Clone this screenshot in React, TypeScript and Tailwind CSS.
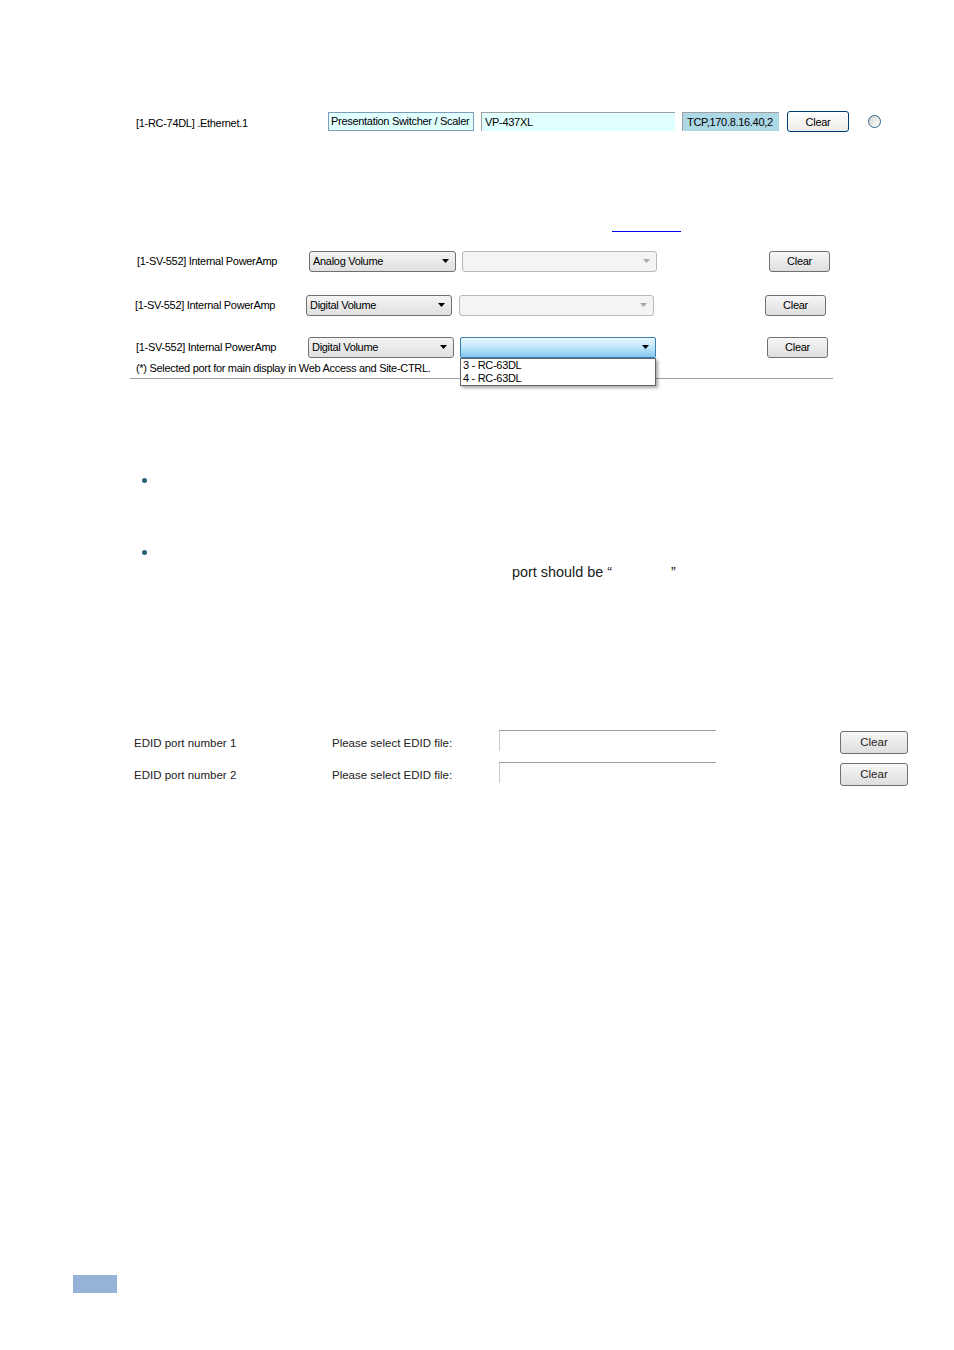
import React from "react";

const ui = "font-['Liberation_Sans',Arial,sans-serif]";
const small = "text-[11px] tracking-[-0.3px] leading-none";

function Arrow({ disabled }: { disabled?: boolean }) {
  return (
    <svg width="7" height="4" viewBox="0 0 7 4" className="shrink-0">
      <path d="M0 0h7L3.5 4z" fill={disabled ? "#a8a8a8" : "#000"} />
    </svg>
  );
}

function Select({ text, className }: { text: string; className: string }) {
  return (
    <div
      className={`flex h-[21px] shrink-0 items-center justify-between rounded-[3px] border border-[#707070] bg-linear-to-b from-[#f4f4f4] to-[#e0e0e0] pl-[3px] pr-[6px] ${className}`}
    >
      <span>{text}</span>
      <Arrow />
    </div>
  );
}

function DisabledSelect({ className }: { className: string }) {
  return (
    <div
      className={`flex h-[21px] shrink-0 items-center justify-end rounded-[3px] border border-[#b8b8b8] bg-[#f4f4f4] pr-[6px] ${className}`}
    >
      <Arrow disabled />
    </div>
  );
}

function ClearButton({ className }: { className: string }) {
  return (
    <div
      className={`flex h-[21px] shrink-0 items-center justify-center rounded-[3px] border border-[#707070] bg-linear-to-b from-[#f6f6f6] to-[#dedede] pt-[1px] ${className}`}
    >
      Clear
    </div>
  );
}

function OpenSelect({ className }: { className: string }) {
  return (
    <div className={`relative shrink-0 ${className}`}>
      <div className="flex h-[21px] items-center justify-end rounded-[2px] border border-[#3c7fb1] bg-linear-to-b from-[#eaf6fd] via-[#bee6fd] to-[#80c6ec] pr-[6px]">
        <Arrow />
      </div>
      <div className="absolute left-0 top-[21px] z-10 w-full border border-[#646464] bg-white pl-[2px] leading-[13px] shadow-[2px_2px_3px_rgba(0,0,0,0.35)]">
        <div>3 - RC-63DL</div>
        <div>4 - RC-63DL</div>
      </div>
    </div>
  );
}

export default function App() {
  return (
    <div className={`flex h-[1350px] w-[954px] flex-col bg-white text-black ${ui}`}>
      {/* device row */}
      <div className={`mt-[111px] flex h-[21px] items-center pl-[136px] ${small}`}>
        <span className="w-[192px] shrink-0 pt-[3px]">[1-RC-74DL] .Ethernet.1</span>
        <div className="flex h-[19px] w-[146px] shrink-0 items-center border border-[#7f9db9] bg-[#e0ffff] pl-[2px]">
          Presentation Switcher / Scaler
        </div>
        <div className="ml-[7px] flex h-[19px] w-[194px] shrink-0 items-center border-l border-t border-[#a0a0a0] bg-[#e0ffff] pl-[3px]">
          VP-437XL
        </div>
        <div className="ml-[7px] flex h-[19px] w-[97px] shrink-0 items-center border-l border-t border-[#a0a0a0] bg-[#add8e6] pl-[4px]">
          TCP,170.8.16.40,2
        </div>
        <div className="ml-[8px] flex h-[21px] w-[62px] shrink-0 items-center justify-center rounded-[3px] border border-[#003c74] bg-linear-to-b from-white to-[#ecebe6] pt-[2px]">
          Clear
        </div>
        <div className="ml-[19px] h-[13px] w-[13px] shrink-0 rounded-full border border-[#2f5f8f] bg-linear-to-br from-[#d6d6d0] to-white" />
      </div>

      <div className="ml-[612px] mt-[99px] h-px w-[69px] bg-[#0000ee]" />

      {/* volume rows */}
      <div className={`mt-[18px] flex h-[22px] items-center pl-[137px] ${small}`}>
        <span className="w-[172px] shrink-0">[1-SV-552] Internal PowerAmp</span>
        <Select text="Analog Volume" className="w-[147px]" />
        <DisabledSelect className="ml-[6px] w-[195px]" />
        <ClearButton className="ml-[112px] w-[61px]" />
      </div>
      <div className={`mt-[22px] flex h-[22px] items-center pl-[135px] ${small}`}>
        <span className="w-[171px] shrink-0">[1-SV-552] Internal PowerAmp</span>
        <Select text="Digital Volume" className="w-[146px]" />
        <DisabledSelect className="ml-[7px] w-[195px]" />
        <ClearButton className="ml-[111px] w-[61px]" />
      </div>
      <div className={`mt-[20px] flex h-[22px] items-center pl-[136px] ${small}`}>
        <span className="w-[172px] shrink-0">[1-SV-552] Internal PowerAmp</span>
        <Select text="Digital Volume" className="w-[146px]" />
        <OpenSelect className="ml-[6px] w-[196px]" />
        <ClearButton className="ml-[111px] w-[61px]" />
      </div>
      <div className="mt-[4px] h-[12px] pl-[136px] text-[11px] leading-[12px] tracking-[-0.3px]">
        (*) Selected port for main display in Web Access and Site-CTRL.
      </div>
      <div className="ml-[130px] mt-[4px] h-px w-[703px] bg-[#a0a0a0]" />

      {/* bullets */}
      <div className="ml-[142px] mt-[99px] h-[5px] w-[5px] rounded-full bg-[#2e5f77]" />
      <div className="ml-[142px] mt-[67px] h-[5px] w-[5px] rounded-full bg-[#2e5f77]" />
      <div className="mt-[9px] h-[16px] pl-[512px] text-[14.4px] leading-[16px] text-[#1a1a1a]">
        port should be “<span className="inline-block w-[59px]" />”
      </div>

      {/* EDID rows */}
      {[1, 2].map((n, i) => (
        <div
          key={n}
          className={`flex h-[24px] items-center pl-[134px] text-[11.5px] leading-none text-[#222] ${i === 0 ? "mt-[150px]" : "mt-[8px]"}`}
        >
          <span className="w-[198px] shrink-0 pt-[3px]">EDID port number {n}</span>
          <span className="w-[167px] shrink-0 pt-[3px]">Please select EDID file:</span>
          <div className="h-[21px] w-[217px] shrink-0 self-start border-l border-t border-l-[#c8c8c8] border-t-[#a0a0a0]" />
          <div className="ml-[124px] flex h-[23px] w-[68px] shrink-0 items-center justify-center rounded-[3px] border border-[#707070] bg-linear-to-b from-[#f6f6f6] to-[#dedede] pt-[2px]">
            Clear
          </div>
        </div>
      ))}

      <div className="ml-[73px] mt-[489px] h-[18px] w-[44px] shrink-0 bg-[#95b3d7]" />
    </div>
  );
}
